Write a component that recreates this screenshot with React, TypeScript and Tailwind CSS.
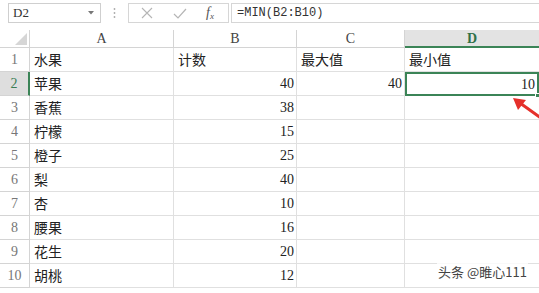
import React from "react";

const fruits = ["水果", "苹果", "香蕉", "柠檬", "橙子", "梨", "杏", "腰果", "花生", "胡桃"];
const counts = ["计数", "40", "38", "15", "25", "40", "10", "16", "20", "12"];

const cjk = { fontFamily: '"Noto Sans CJK SC", "Noto Sans", sans-serif' };
const mono = { fontFamily: '"Liberation Mono", "DejaVu Sans Mono", monospace' };
const serif = { fontFamily: '"Liberation Serif", serif' };

export default function App() {
  return (
    <div className="relative w-[539px] h-[293px] bg-white overflow-hidden text-[#333]">
      {/* toolbar */}
      <div className="flex items-center h-[26px] pt-[3px] pb-[3px] pl-[8px]">
        <div className="relative w-[93px] h-[20px] border border-[#cfcfcf] flex items-center pl-[4px] text-[13px]" style={serif}>
          D2
          <svg className="absolute right-[6px] top-[7px]" width="6" height="4" viewBox="0 0 6 4">
            <path d="M0 0 L6 0 L3 3.5 Z" fill="#777" />
          </svg>
        </div>
        <div className="w-[27px] flex justify-center">
          <svg width="3" height="12" viewBox="0 0 3 12">
            <circle cx="1.5" cy="2" r="0.9" fill="#aaa" />
            <circle cx="1.5" cy="6" r="0.9" fill="#aaa" />
            <circle cx="1.5" cy="10" r="0.9" fill="#aaa" />
          </svg>
        </div>
        <div className="w-[101px] h-[20px] border border-[#d6d6d6] flex items-center">
          <div className="w-[36px] flex justify-center">
            <svg width="12" height="12" viewBox="0 0 12 12">
              <path d="M1 1 L11 11 M11 1 L1 11" stroke="#b5b5b5" strokeWidth="1.1" />
            </svg>
          </div>
          <div className="w-[30px] flex justify-center">
            <svg width="14" height="11" viewBox="0 0 14 11">
              <path d="M1 6 L5 10 L13 1" stroke="#b5b5b5" strokeWidth="1.2" fill="none" />
            </svg>
          </div>
          <div className="w-[30px] flex justify-center items-end text-[14px] italic text-[#555] leading-none" style={serif}>
            f<span className="text-[9px] relative top-[1px]">x</span>
          </div>
        </div>
        <div className="flex-1 h-[20px] border border-[#d6d6d6] border-r-0 ml-[2px] flex items-center pl-[5px] text-[12px]" style={mono}>
          =MIN(B2:B10)
        </div>
      </div>

      {/* sheet */}
      <div className="mt-[4px] grid grid-cols-[30px_144px_123px_108px_1fr] grid-rows-[18px_repeat(10,24px)]">
        {/* header row */}
        <div className="relative border-r border-b border-[#d4d4d4]">
          <svg className="absolute right-[2px] bottom-[2px]" width="12" height="12" viewBox="0 0 12 12">
            <path d="M12 0 L12 12 L0 12 Z" fill="#d6d6d6" />
          </svg>
        </div>
        {["A", "B", "C"].map((c) => (
          <div key={c} className="border-r border-b border-[#d4d4d4] flex items-center justify-center text-[14px] text-[#444]" style={serif}>
            {c}
          </div>
        ))}
        <div className="bg-[#e3e3e3] border-b-2 border-[#3b8457] flex items-center justify-center text-[14px] text-[#2f7048] font-bold" style={serif}>
          D
        </div>

        {fruits.map((f, i) => {
          const r = i + 1;
          const sel = r === 2;
          return (
            <React.Fragment key={r}>
              <div
                className={`border-b border-[#d4d4d4] flex items-center justify-center text-[14px] ${sel ? "bg-[#dedede] border-r-2 border-r-[#3b8457] text-[#3a7d54]" : "border-r text-[#777]"}`}
                style={serif}
              >
                {r}
              </div>
              <div className="border-r border-b border-[#e0e0e0] flex items-center pl-[4px] text-[14px] text-[#222]" style={cjk}>
                {f}
              </div>
              <div
                className={`border-r border-b border-[#e0e0e0] flex items-center text-[14px] text-[#222] ${r === 1 ? "pl-[4px]" : "justify-end pr-[2px]"}`}
                style={r === 1 ? cjk : serif}
              >
                {counts[i]}
              </div>
              <div
                className={`border-r border-b border-[#e0e0e0] flex items-center text-[14px] text-[#222] ${r === 1 ? "pl-[4px]" : "justify-end pr-[2px]"}`}
                style={r === 1 ? cjk : serif}
              >
                {r === 1 ? "最大值" : r === 2 ? "40" : ""}
              </div>
              <div
                className={`relative flex items-center text-[14px] text-[#222] ${sel ? "border-2 border-[#3b8457] justify-end pr-[2px]" : "border-b border-[#e0e0e0]"} ${r === 1 ? "pl-[4px]" : ""}`}
                style={r === 1 ? cjk : serif}
              >
                {r === 1 ? "最小值" : sel ? "10" : ""}
                {sel && <div className="absolute right-[-3px] bottom-[-4px] w-[5px] h-[5px] bg-[#3b8457] border border-white" />}
              </div>
            </React.Fragment>
          );
        })}
      </div>

      {/* red arrow */}
      <svg className="absolute left-[505px] top-[94px]" width="40" height="30" viewBox="0 0 40 30">
        <path d="M36 24 L15 9" stroke="#e5302b" strokeWidth="3" strokeLinecap="round" />
        <path d="M8 4 L21 6 L13 16 Z" fill="#e5302b" />
      </svg>

      {/* watermark */}
      <div className="absolute left-[437px] top-[262px] text-[13px] text-[#444] bg-white/80 px-[1px]" style={cjk}>
        头条 @睢心111
      </div>
    </div>
  );
}
